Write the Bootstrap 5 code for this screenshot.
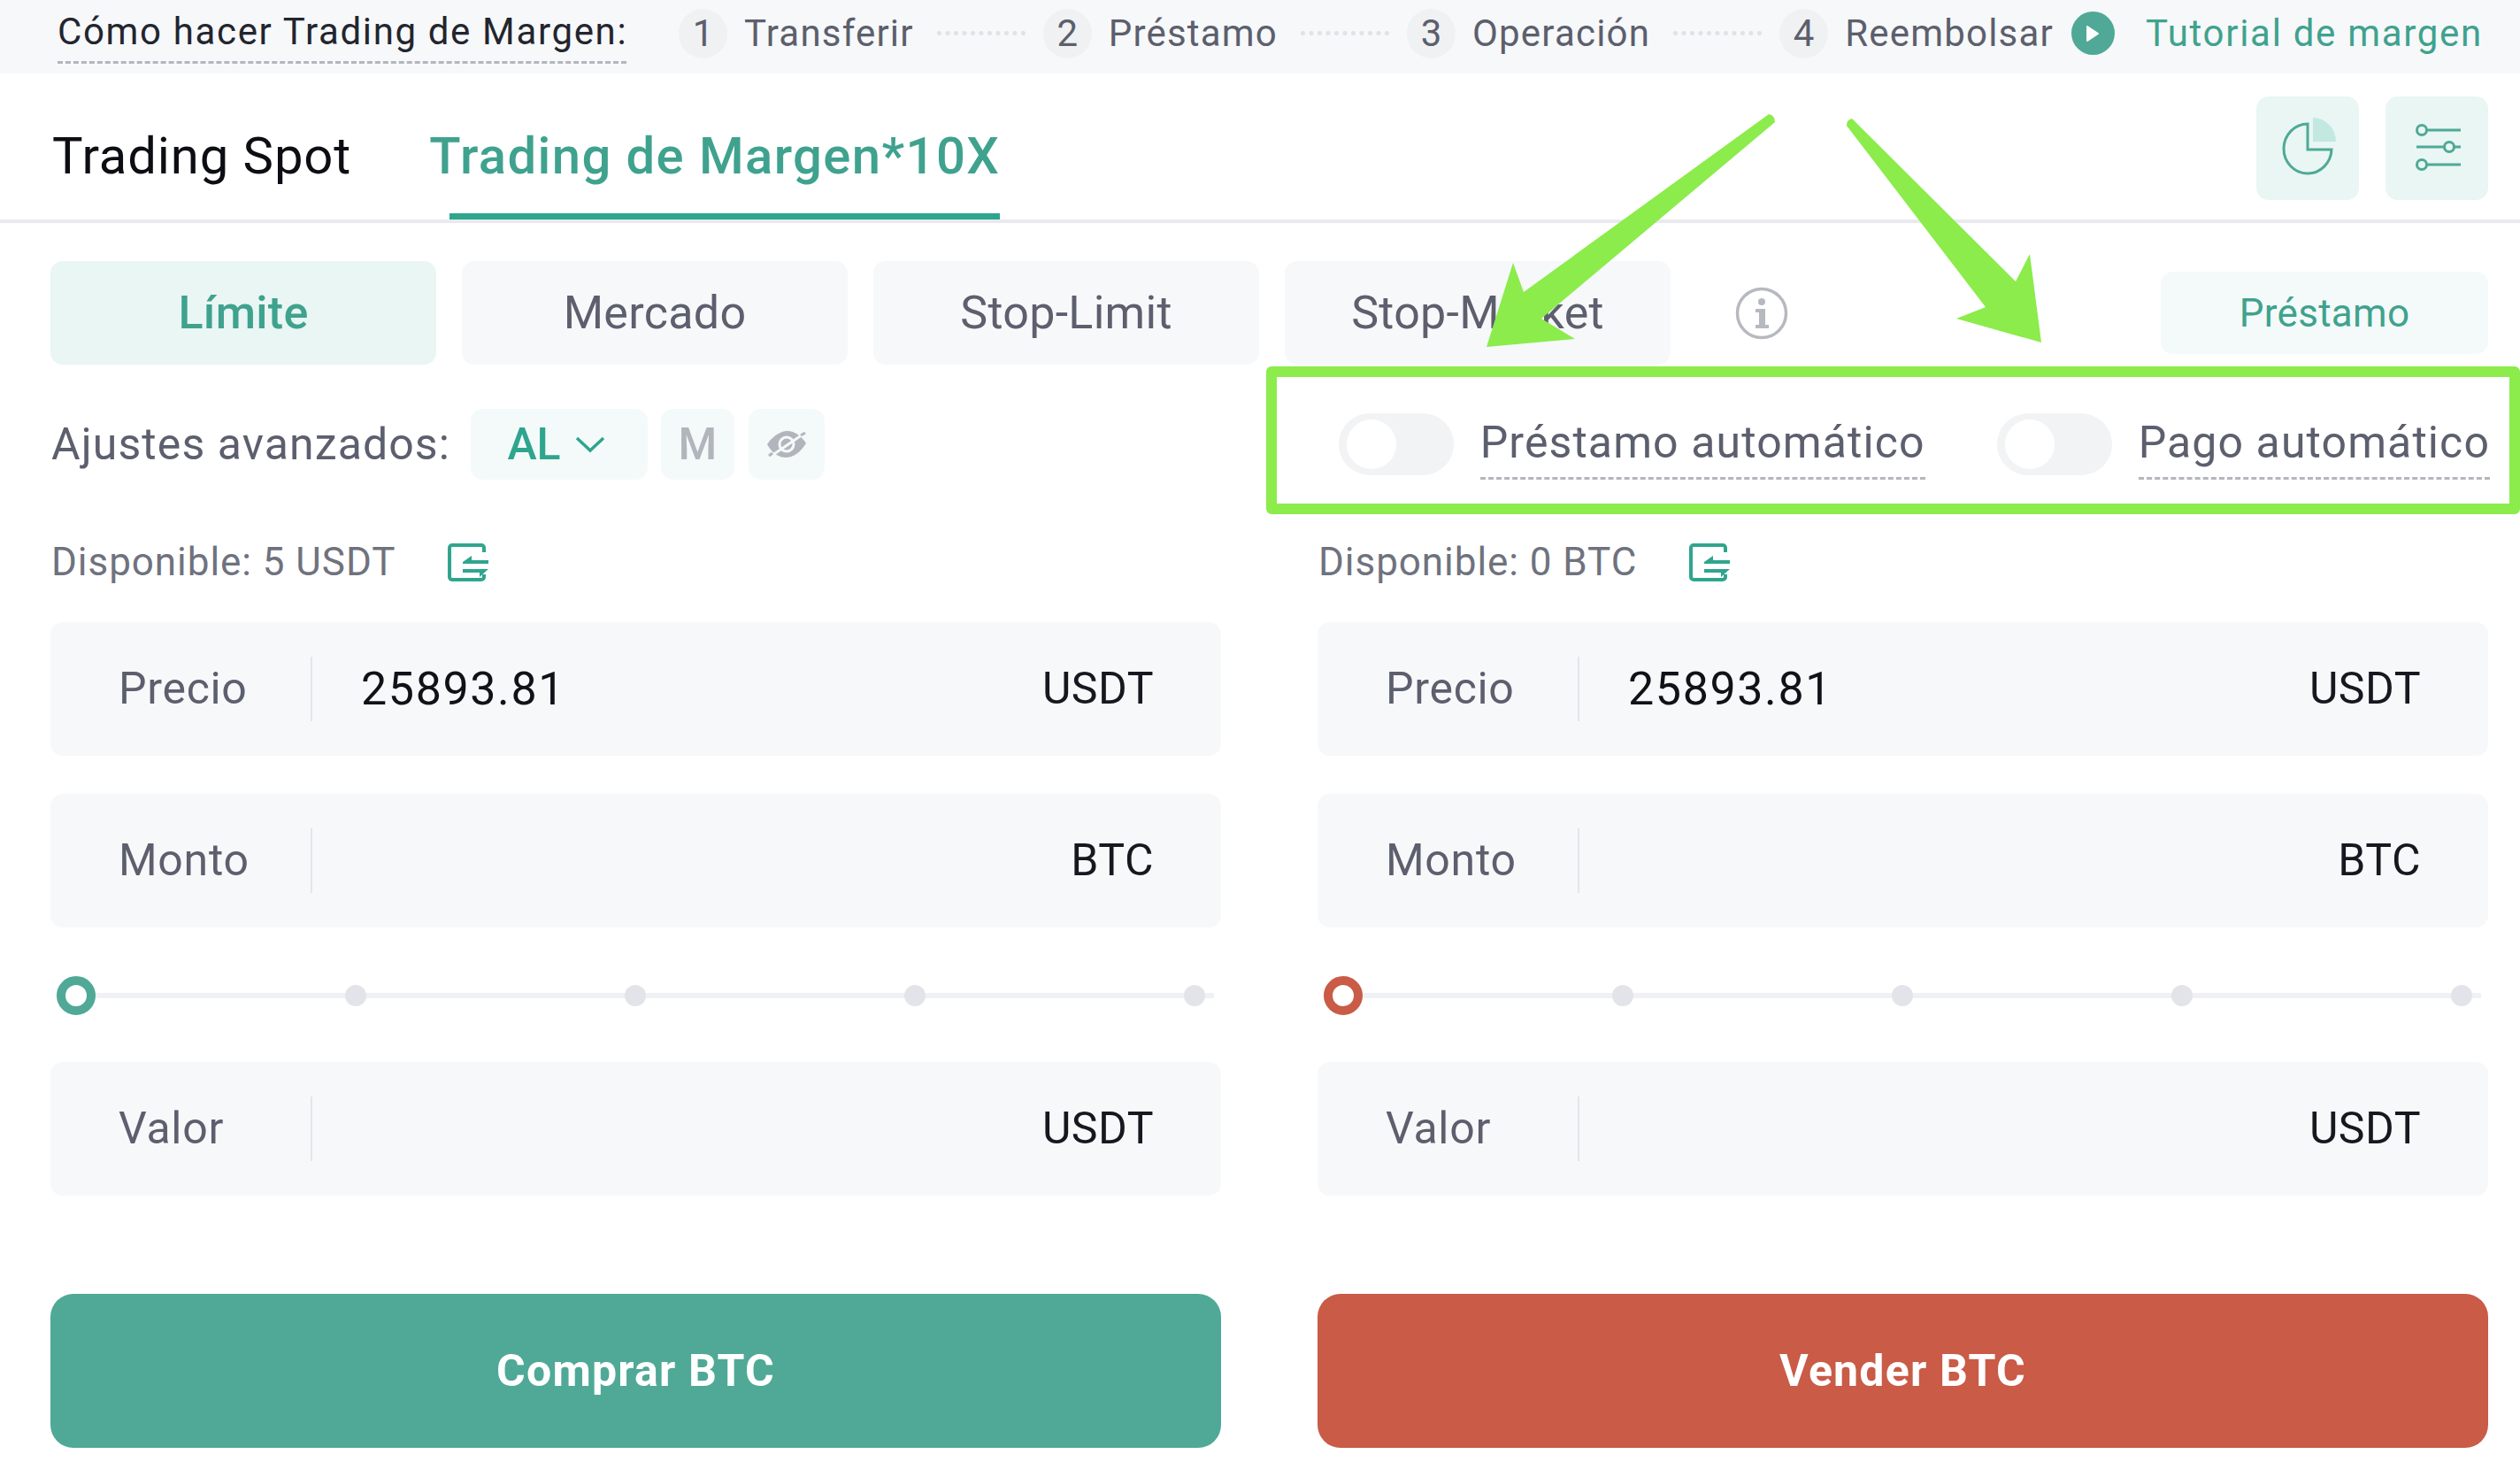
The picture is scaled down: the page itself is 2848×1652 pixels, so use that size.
<!DOCTYPE html>
<html lang="es">
<head>
  <meta charset="UTF-8">
  <title>Trading de Margen</title>
  <meta name="viewport" content="width=device-width, initial-scale=1">

  <link href="https://cdn.jsdelivr.net/npm/bootstrap@5.3.3/dist/css/bootstrap.min.css" rel="stylesheet">

  <style>
    body {
      width: 2848px;
      height: 1652px;
      overflow: hidden;
      background: #fff;
      font-family: Roboto, "Liberation Sans", sans-serif;
      color: #5c5f6d;
    }

    /* top strip */
    .guide-bar { height: 83px; background: #f7f8fa; padding-left: 65px; font-size: 42px; }
    .guide-title { color: #23252e; border-bottom: 3px dashed #b4b6bd; line-height: 46px; margin-top: 13px; height: 59px; width: 643px; white-space: nowrap; letter-spacing: 1.65px; margin-right: 59px; }
    .guide-steps { height: 75px; }
    .step-num { width: 55px; height: 56px; border-radius: 50%; background: #f0f1f3; margin-right: 19px; color: #5c5f6d; }
    .step-text { white-space: nowrap; letter-spacing: 1.2px; }
    .step-dash { width: 100px; border-top: 5px dotted #e0e2e6; margin: 0 20px 0 26px; }
    .play-dot { width: 49px; height: 49px; border-radius: 50%; background: #4fa996; margin: 0 35px 0 20px; }
    .guide-link { color: #3fa28e; white-space: nowrap; letter-spacing: 1.7px; }

    /* tabs */
    .tab-strip { height: 169px; border-bottom: 4px solid #e9eaee; padding: 26px 36px 0 59px; }
    .tab-name { font-size: 58px; line-height: 1; margin-top: 38px; color: #0d0e14; white-space: nowrap; letter-spacing: .9px; }
    .tab-on { color: #3fa28e; margin-left: 88px; align-self: stretch; position: relative; font-weight: 500; letter-spacing: 1.4px; }
    .tab-on::after { content: ""; position: absolute; left: 23px; right: 0; top: 94px; height: 7px; background: #2ea58d; }
    .tool-btn { width: 116px; height: 117px; border-radius: 14px; background: #e9f6f3; margin-left: 30px; }

    /* order type */
    .page-body { padding: 43px 36px 0 57px; }
    .order-btn { width: 436px; height: 117px; border-radius: 14px; background: #f7f8fa; font-size: 52px; color: #5c5f6d; letter-spacing: .3px; }
    .order-btn + .order-btn { margin-left: 29px; }
    .order-on { background: #e9f6f3; color: #3fa28e; font-weight: 500; }
    .info-ico { margin-left: 73px; }
    .loan-btn { width: 370px; height: 93px; border-radius: 14px; background: #f4faf9; color: #3fa28e; font-size: 44px; letter-spacing: .3px; }

    /* advanced row */
    .adv-row { height: 80px; margin-top: 50px; }
    .adv-label { font-size: 50px; margin: 0 23px 0 1px; color: #5c5f6d; white-space: nowrap; letter-spacing: 1.1px; }
    .adv-chip { height: 80px; border-radius: 14px; background: #f4faf9; font-size: 50px; }
    .chip-al { width: 200px; color: #2fa58e; font-weight: 500; margin-right: 15px; padding-right: 7px; }
    .chip-m { width: 83px; color: #b3b5bc; font-weight: 500; margin-right: 16px; }
    .chip-eye { width: 86px; }
    .switch-group { margin-right: -2px; }
    .switch-track { width: 130px; height: 70px; border-radius: 35px; background: #f2f3f5; padding-left: 9px; margin-right: 30px; }
    .switch-knob { width: 56px; height: 56px; border-radius: 50%; background: #fff; }
    .switch-text { font-size: 50px; white-space: nowrap; border-bottom: 3px dashed #b4b6bd; line-height: 62px; height: 73px; margin-top: 7px; letter-spacing: 1.1px; }
    .switch-gap { margin-right: 81px; }

    /* forms */
    .form-cols { --bs-gutter-x: 109px; margin-top: 71px; }
    .avail-line { height: 43px; font-size: 44px; margin-bottom: 47px; margin-left: 1px; padding-top: 1px; color: #6f727e; white-space: nowrap; letter-spacing: .95px; }
    .avail-line svg { margin-left: 59px; }
    .field-box { height: 151px; border-radius: 14px; background: #f7f8fa; font-size: 50px; padding-right: 76px; margin-bottom: 43px; }
    .field-last { margin-bottom: 0; }
    .field-label { width: 296px; height: 73px; padding-left: 77px; border-right: 2px solid #e4e5e9; color: #5c5f6d; letter-spacing: .7px; }
    .field-value { padding-left: 55px; color: #111218; font-size: 52px; letter-spacing: 1.6px; }
    .field-unit { color: #17181f; letter-spacing: .5px; }
    .pct-slider { height: 44px; margin: 55px 8px 53px 7px; background: linear-gradient(#f0f1f4, #f0f1f4) center / 100% 6px no-repeat; }
    .pct-stop { width: 44px; height: 44px; }
    .pct-dot { width: 24px; height: 24px; border-radius: 50%; background: #e3e4e9; }
    .pct-handle { width: 44px; height: 44px; border-radius: 50%; background: #fff; border: 10px solid #4fa996; }
    .pct-sell { border-color: #c95b47; }
    .go-btn { height: 174px; margin-top: 111px; border-radius: 26px; font-size: 50px; font-weight: 700; color: #fff; letter-spacing: 1.2px; }
    .go-buy { background: #4fa996; }
    .go-sell { background: #c95b47; }

    /* marks laid over the screenshot */
    .mark-box { position: absolute; left: 1431px; top: 414px; width: 1417px; height: 167px; border: 12px solid #8bec4b; border-radius: 6px; pointer-events: none; }
    .mark-arrows { position: absolute; left: 0; top: 0; pointer-events: none; }
  </style>
</head>
<body class="position-relative">

  <div class="guide-bar d-flex align-items-start">
    <div class="guide-title">Cómo hacer Trading de Margen:</div>
    <div class="guide-steps d-flex align-items-center">
      <span class="step-num d-flex align-items-center justify-content-center">1</span>
      <span class="step-text">Transferir</span>
      <span class="step-dash"></span>
      <span class="step-num d-flex align-items-center justify-content-center">2</span>
      <span class="step-text">Préstamo</span>
      <span class="step-dash"></span>
      <span class="step-num d-flex align-items-center justify-content-center">3</span>
      <span class="step-text">Operación</span>
      <span class="step-dash"></span>
      <span class="step-num d-flex align-items-center justify-content-center">4</span>
      <span class="step-text">Reembolsar</span>
      <span class="play-dot d-flex align-items-center justify-content-center">
        <svg width="16" height="20" viewBox="0 0 16 20"><path d="M2 2 L14 10 L2 18 Z" fill="#fff" stroke="#fff" stroke-width="2" stroke-linejoin="round"/></svg>
      </span>
      <span class="guide-link">Tutorial de margen</span>
    </div>
  </div>

  <div class="tab-strip d-flex align-items-start">
    <div class="tab-name">Trading Spot</div>
    <div class="tab-name tab-on">Trading de Margen*10X</div>
    <div class="tool-btn d-flex align-items-center justify-content-center ms-auto">
      <svg width="116" height="117" viewBox="0 0 116 117">
        <path d="M64 24 A26 27 0 0 1 90 51 H64 Z" fill="#c2e8e1"/>
        <path d="M58 31 A27 28 0 1 0 85 60 H58 Z" fill="none" stroke="#4fa996" stroke-width="3"/>
      </svg>
    </div>
    <div class="tool-btn d-flex align-items-center justify-content-center">
      <svg width="116" height="117" viewBox="0 0 116 117" fill="none" stroke="#4fa996" stroke-width="3">
        <path d="M47 38 H85 M35 57 H66 M78 57 H85 M47 77 H85"/>
        <circle cx="41" cy="38" r="5.5"/>
        <circle cx="72" cy="57" r="5.5"/>
        <circle cx="41" cy="77" r="5.5"/>
      </svg>
    </div>
  </div>

  <div class="page-body">
    <div class="d-flex align-items-center">
      <div class="order-btn order-on d-flex align-items-center justify-content-center">Límite</div>
      <div class="order-btn d-flex align-items-center justify-content-center">Mercado</div>
      <div class="order-btn d-flex align-items-center justify-content-center">Stop-Limit</div>
      <div class="order-btn d-flex align-items-center justify-content-center">Stop-Market</div>
      <svg class="info-ico" width="60" height="60" viewBox="0 0 60 60">
        <circle cx="30" cy="30" r="27.5" fill="none" stroke="#b7b9c0" stroke-width="3.5"/>
        <circle cx="30" cy="17" r="4" fill="#b7b9c0"/>
        <path d="M23 25 H34 V43 H38 V47 H23 V43 H27 V29 H23 Z" fill="#b7b9c0"/>
      </svg>
      <div class="loan-btn d-flex align-items-center justify-content-center ms-auto">Préstamo</div>
    </div>

    <div class="adv-row d-flex align-items-center">
      <span class="adv-label">Ajustes avanzados:</span>
      <div class="adv-chip chip-al d-flex align-items-center justify-content-center gap-3">
        AL
        <svg width="34" height="20" viewBox="0 0 34 20"><path d="M2 3 L17 17 L32 3" fill="none" stroke="#2fa58e" stroke-width="3.5"/></svg>
      </div>
      <div class="adv-chip chip-m d-flex align-items-center justify-content-center">M</div>
      <div class="adv-chip chip-eye d-flex align-items-center justify-content-center">
        <svg width="46" height="32" viewBox="0 0 46 32">
          <path d="M1 16 C10 3 20 1 24 1 C32 1 40 7 45 15 C38 26 30 31 22 31 C13 31 6 25 1 16 Z" fill="#b3b5bc"/>
          <circle cx="23" cy="16" r="8" fill="none" stroke="#f4faf9" stroke-width="3"/>
          <path d="M3 31 L44 3" stroke="#f4faf9" stroke-width="3"/>
          <path d="M3 29 L7 26 M39 6 L44 3" stroke="#b3b5bc" stroke-width="3"/>
        </svg>
      </div>
      <div class="switch-group d-flex align-items-center ms-auto">
        <div class="switch-track d-flex align-items-center"><div class="switch-knob"></div></div>
        <div class="switch-text switch-gap">Préstamo automático</div>
        <div class="switch-track d-flex align-items-center"><div class="switch-knob"></div></div>
        <div class="switch-text">Pago automático</div>
      </div>
    </div>

    <div class="row form-cols">
      <div class="col-6">
        <div class="avail-line d-flex align-items-center">
          Disponible: 5 USDT
          <svg width="46" height="43" viewBox="0 0 46 43">
            <path d="M41 10 V5 a3 3 0 0 0 -3 -3 H5 a3 3 0 0 0 -3 3 V38 a3 3 0 0 0 3 3 H38 a3 3 0 0 0 3 -3 V35" fill="none" stroke="#2fa58e" stroke-width="4"/>
            <path d="M17 21 L27 14 V19 H46 V23 H17 Z M17 29 H46 L36 38 V33 H17 Z" fill="#2fa58e"/>
          </svg>
        </div>
        <div class="field-box d-flex align-items-center">
          <span class="field-label d-flex align-items-center">Precio</span>
          <span class="field-value">25893.81</span>
          <span class="field-unit ms-auto">USDT</span>
        </div>
        <div class="field-box field-last d-flex align-items-center">
          <span class="field-label d-flex align-items-center">Monto</span>
          <span class="field-unit ms-auto">BTC</span>
        </div>
        <div class="pct-slider d-flex justify-content-between">
          <div class="pct-stop d-flex align-items-center justify-content-center"><div class="pct-handle"></div></div>
          <div class="pct-stop d-flex align-items-center justify-content-center"><div class="pct-dot"></div></div>
          <div class="pct-stop d-flex align-items-center justify-content-center"><div class="pct-dot"></div></div>
          <div class="pct-stop d-flex align-items-center justify-content-center"><div class="pct-dot"></div></div>
          <div class="pct-stop d-flex align-items-center justify-content-center"><div class="pct-dot"></div></div>
        </div>
        <div class="field-box field-last d-flex align-items-center">
          <span class="field-label d-flex align-items-center">Valor</span>
          <span class="field-unit ms-auto">USDT</span>
        </div>
        <div class="go-btn go-buy d-flex align-items-center justify-content-center">Comprar BTC</div>
      </div>

      <div class="col-6">
        <div class="avail-line d-flex align-items-center">
          Disponible: 0 BTC
          <svg width="46" height="43" viewBox="0 0 46 43">
            <path d="M41 10 V5 a3 3 0 0 0 -3 -3 H5 a3 3 0 0 0 -3 3 V38 a3 3 0 0 0 3 3 H38 a3 3 0 0 0 3 -3 V35" fill="none" stroke="#2fa58e" stroke-width="4"/>
            <path d="M17 21 L27 14 V19 H46 V23 H17 Z M17 29 H46 L36 38 V33 H17 Z" fill="#2fa58e"/>
          </svg>
        </div>
        <div class="field-box d-flex align-items-center">
          <span class="field-label d-flex align-items-center">Precio</span>
          <span class="field-value">25893.81</span>
          <span class="field-unit ms-auto">USDT</span>
        </div>
        <div class="field-box field-last d-flex align-items-center">
          <span class="field-label d-flex align-items-center">Monto</span>
          <span class="field-unit ms-auto">BTC</span>
        </div>
        <div class="pct-slider d-flex justify-content-between">
          <div class="pct-stop d-flex align-items-center justify-content-center"><div class="pct-handle pct-sell"></div></div>
          <div class="pct-stop d-flex align-items-center justify-content-center"><div class="pct-dot"></div></div>
          <div class="pct-stop d-flex align-items-center justify-content-center"><div class="pct-dot"></div></div>
          <div class="pct-stop d-flex align-items-center justify-content-center"><div class="pct-dot"></div></div>
          <div class="pct-stop d-flex align-items-center justify-content-center"><div class="pct-dot"></div></div>
        </div>
        <div class="field-box field-last d-flex align-items-center">
          <span class="field-label d-flex align-items-center">Valor</span>
          <span class="field-unit ms-auto">USDT</span>
        </div>
        <div class="go-btn go-sell d-flex align-items-center justify-content-center">Vender BTC</div>
      </div>
    </div>
  </div>

  <!-- annotation drawn on top of the screenshot -->
  <div class="mark-box"></div>
  <svg class="mark-arrows" width="2848" height="600" viewBox="0 0 2848 600">
    <path d="M1999 129 Q2006 130 2006 138 L1742 360 L1780 383 L1680 392 L1710 297 L1722 330 Z" fill="#8bec4b"/>
    <path d="M2093 134 Q2087 135 2087 142 L2244 347 L2211 360 L2307 387 L2294 287 L2278 318 Z" fill="#8bec4b"/>
  </svg>

  <script src="https://cdn.jsdelivr.net/npm/bootstrap@5.3.3/dist/js/bootstrap.bundle.min.js"></script>
</body>
</html>
